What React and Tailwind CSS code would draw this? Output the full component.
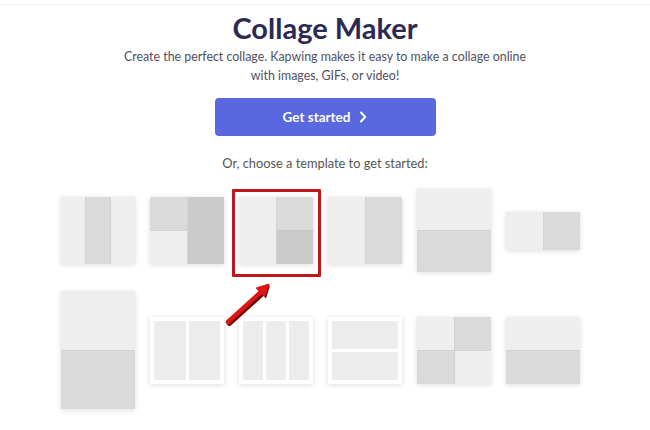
const L = "bg-[#eeeeee]";
const M = "bg-[#dadada]";
const D = "bg-[#cbcbcb]";
const tile = "shadow-[0_1px_5px_rgba(0,0,0,0.14)]";

function Cols({ cells, className }) {
  return (
    <div className={`flex ${tile} ${className}`}>
      {cells.map((c, i) => (
        <div key={i} className={`flex-1 ${c} ${i > 0 ? "border-l border-[#d2d2d2]" : ""}`} />
      ))}
    </div>
  );
}

function Rows({ cells, className }) {
  return (
    <div className={`flex flex-col ${tile} ${className}`}>
      {cells.map((c, i) => (
        <div key={i} className={`flex-1 ${c} ${i > 0 ? "border-t border-[#d2d2d2]" : ""}`} />
      ))}
    </div>
  );
}

function Framed({ n, dir }) {
  return (
    <div
      className={`flex ${dir === "col" ? "flex-col" : "flex-row"} gap-[3px] p-[4px] bg-white w-[74px] h-[67px] ${tile}`}
    >
      {Array.from({ length: n }).map((_, i) => (
        <div key={i} className="flex-1 bg-[#ececec]" />
      ))}
    </div>
  );
}

export default function App() {
  return (
    <div
      className="relative w-[650px] h-[430px] bg-white overflow-hidden"
      style={{ fontFamily: "Lato, 'Noto Sans', sans-serif" }}
    >
      <div className="h-[5px] border-b border-[#efefef]" />
      <div className="flex flex-col items-center">
        <h1 className="mt-[6px] text-[29px] leading-[34px] font-bold text-[#2a2a52]">
          Collage Maker
        </h1>
        <p className="mt-[2px] text-[12.4px] leading-[19px] text-[#4f4f5f] text-center w-[420px]">
          Create the perfect collage. Kapwing makes it easy to make a collage online with images, GIFs, or video!
        </p>
        <button className="mt-[13px] w-[221px] h-[38px] rounded-[4px] bg-[#5a68e0] text-white text-[13.5px] font-bold flex items-center justify-center gap-[9px]">
          Get started
          <svg width="8" height="12" viewBox="0 0 8 12">
            <path d="M2 1.5 L6.2 6 L2 10.5" fill="none" stroke="white" strokeWidth="2" strokeLinecap="round" strokeLinejoin="round" />
          </svg>
        </button>
        <p className="mt-[19px] text-[12.8px] leading-[16px] text-[#555]">
          Or, choose a template to get started:
        </p>
      </div>

      <div className="mt-[18px] pl-[61px] flex flex-col gap-[19px]">
        <div className="grid grid-cols-[repeat(6,74px)] gap-x-[15px] items-center h-[83px]">
          <Cols cells={[L, M, L]} className="h-[67px]" />
          <div className={`flex h-[67px] ${tile}`}>
            <div className="flex-1 flex flex-col">
              <div className={`flex-1 ${M}`} />
              <div className={`flex-1 ${L} border-t border-[#d2d2d2]`} />
            </div>
            <div className={`flex-1 ${D} border-l border-[#d2d2d2]`} />
          </div>
          <div className="relative h-[67px]">
            <div className={`flex h-full ${tile}`}>
              <div className={`flex-1 ${L}`} />
              <div className="flex-1 flex flex-col border-l border-[#d2d2d2]">
                <div className={`flex-1 ${M}`} />
                <div className={`flex-1 ${D} border-t border-[#c4c4c4]`} />
              </div>
            </div>
            <div className="absolute left-[-7px] top-[-8px] w-[89px] h-[88px] border-[3px] border-[#c0171c] rounded-[1px]" />
          </div>
          <Cols cells={[L, M]} className="h-[67px]" />
          <Rows cells={[L, M]} className="h-[83px]" />
          <Cols cells={[L, M]} className="h-[38px]" />
        </div>

        <div className="grid grid-cols-[repeat(6,74px)] gap-x-[15px] items-center h-[118px]">
          <Rows cells={[L, M]} className="h-[118px]" />
          <Framed n={2} dir="row" />
          <Framed n={3} dir="row" />
          <Framed n={2} dir="col" />
          <div className={`grid grid-cols-2 grid-rows-2 h-[67px] gap-px bg-[#d2d2d2] ${tile}`}>
            <div className={L} />
            <div className={M} />
            <div className={M} />
            <div className={L} />
          </div>
          <Rows cells={[L, M]} className="h-[67px]" />
        </div>
      </div>

      <svg className="absolute left-[220px] top-[277px]" width="60" height="52" viewBox="0 0 60 52">
        <path d="M9.5 46.5 L42 17" stroke="#6b0000" strokeWidth="5" strokeLinecap="round" />
        <path d="M50 8.5 L37.5 12.5 L46 21.5 Z" fill="#6b0000" />
        <path d="M8 45 L40.5 15.5" stroke="#dc1414" strokeWidth="4.5" strokeLinecap="round" />
        <path d="M49 7 L36.2 11 L44.6 19.8 Z" fill="#e01515" stroke="#e01515" strokeWidth="1" strokeLinejoin="round" />
      </svg>
    </div>
  );
}
